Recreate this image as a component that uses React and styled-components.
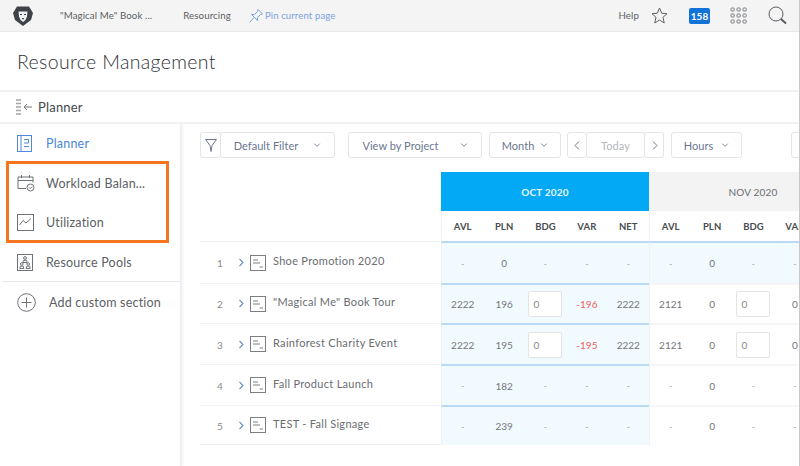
import React from 'react';
import styled, { createGlobalStyle } from 'styled-components';

const GlobalStyle = createGlobalStyle`
  html, body {
    margin: 0;
    height: 100%;
    overflow: hidden;
    background: #fff;
  }
  * { box-sizing: border-box; }
`;

const Page = styled.div`
  width: 800px;
  height: 466px;
  overflow: hidden;
  border-right: 1px solid #c9c9c9;
  font-family: 'Lato', 'Open Sans', sans-serif;
  color: #555a60;
  display: flex;
  flex-direction: column;
`;

const TopBar = styled.header`
  height: 32px;
  flex: none;
  display: flex;
  align-items: center;
  background: #f4f4f4;
  border-bottom: 1px solid #e9e9e9;
  padding-left: 13px;
  font-size: 9.7px;
`;

const TopLink = styled.span`
  color: #5c5f63;
  letter-spacing: 0.1px;
  margin-left: ${props => props.$left || 0}px;
  margin-right: ${props => props.$right || 0}px;
  margin-top: -2px;
  white-space: nowrap;
`;

const PinLink = styled.span`
  display: flex;
  align-items: center;
  gap: 1px;
  margin-left: 17px;
  color: #7da3de;
  font-size: 9.6px;
  letter-spacing: 0.1px;
`;

const TopRight = styled.div`
  margin-left: auto;
  display: flex;
  align-items: center;
  padding-right: 12px;
`;

const Badge = styled.span`
  width: 21px;
  height: 16px;
  margin: 0 20px 0 21px;
  border-radius: 2px;
  background: #1273d8;
  color: #fff;
  font-size: 10px;
  font-weight: 700;
  display: flex;
  align-items: center;
  justify-content: center;
`;

const SearchSlot = styled.span`
  margin-left: 21px;
  display: flex;
`;

const TitleBar = styled.div`
  height: 60px;
  flex: none;
  display: flex;
  align-items: center;
  padding-left: 17px;
  border-bottom: 2px solid #f1f1f1;
`;

const Title = styled.h1`
  margin: 0;
  font-size: 19.5px;
  font-weight: 300;
  letter-spacing: 0.35px;
  color: #2f3238;
`;

const Crumb = styled.div`
  height: 32px;
  flex: none;
  display: flex;
  align-items: center;
  gap: 5px;
  padding-left: 16px;
  border-bottom: 2px solid #f1f1f1;
  font-size: 13px;
  letter-spacing: 0.2px;
  color: #44484d;
`;

const Main = styled.div`
  flex: 1;
  min-height: 0;
  display: flex;
`;

const Sidebar = styled.nav`
  width: 182px;
  flex: none;
  padding: 1px 0 0 2px;
  border-right: 2px solid #eef0f3;
  box-shadow: 1px 0 2px #f3f4f6;
`;

const NavItem = styled.div`
  height: ${props => props.$height || 38}px;
  display: flex;
  align-items: center;
  padding-left: ${props => props.$inset ? 8 : 15}px;
  font-size: 12.5px;
  letter-spacing: 0.2px;
  color: ${props => props.$active ? '#4a85dc' : '#5d6065'};
`;

const NavIcon = styled.span`
  width: ${props => props.$width || 29}px;
  flex: none;
  display: flex;
`;

const Highlight = styled.div`
  width: 163px;
  height: 82px;
  margin-left: 4px;
  padding-top: 1px;
  border: 3px solid #f6761f;
  display: flex;
  flex-direction: column;
  justify-content: center;
  gap: 3px;
`;

const NavDivider = styled.div`
  height: 1px;
  background: #e6e8ec;
`;

const Content = styled.section`
  flex: 1;
  min-width: 0;
  padding: 8px 0 0 18px;
  overflow: hidden;
`;

const Toolbar = styled.div`
  height: 26px;
  display: flex;
  width: 640px;
`;

const ToolButton = styled.div`
  width: ${props => props.$width}px;
  height: 26px;
  flex: none;
  margin-left: ${props => props.$left || 0}px;
  display: flex;
  align-items: center;
  justify-content: center;
  gap: ${props => props.$gap || 0}px;
  border: 1.5px solid #e4e5e7;
  border-radius: 3px;
  background: #fff;
  font-size: 11px;
  letter-spacing: 0.05px;
  color: ${props => props.$muted ? '#b5b8bd' : '#6a7690'};
`;

const Planner = styled.div`
  margin-top: 14px;
  width: 640px;
`;

const HeadRow = styled.div`
  display: flex;
  height: 39px;
  padding-left: 241px;
`;

const MonthHead = styled.div`
  width: 208px;
  flex: none;
  display: flex;
  align-items: center;
  justify-content: center;
  font-size: 10px;
  font-weight: ${props => props.$current ? 700 : 400};
  letter-spacing: 0.2px;
  background: ${props => props.$current ? '#03a9f4' : '#f3f3f3'};
  color: ${props => props.$current ? '#e8f7ff' : '#6a6d72'};
`;

const SubHead = styled.div`
  display: flex;
  height: 30px;
  padding-left: 241px;
`;

const Columns = styled.div`
  width: 208px;
  flex: none;
  display: grid;
  grid-template-columns: repeat(5, 1fr);
  border-left: 1px solid #eef0f2;
`;

const ColLabel = styled.div`
  display: flex;
  align-items: center;
  justify-content: center;
  font-size: 9.5px;
  font-weight: 700;
  letter-spacing: 0.1px;
  color: #4a4d52;
`;

const Row = styled.div`
  display: flex;
  height: ${props => props.$height}px;
`;

const RowName = styled.div`
  width: 241px;
  flex: none;
  display: flex;
  align-items: center;
  border-top: 1px solid #f3f3f3;
  border-bottom: ${props => props.$last ? '1px solid #f0f0f0' : 'none'};
`;

const RowIndex = styled.span`
  width: 40px;
  padding-top: 1px;
  text-align: center;
  font-size: 10px;
  color: #85888d;
`;

const RowIcon = styled.span`
  margin-left: 5px;
  display: flex;
`;

const RowChevron = styled.span`
  margin-left: -2px;
  display: flex;
`;

const RowTitle = styled.span`
  margin-left: 7px;
  padding-bottom: 4px;
  font-size: 11px;
  letter-spacing: 0.3px;
  color: #6a6d72;
  white-space: nowrap;
`;

const RowCells = styled(Columns)`
  background: ${props => props.$tinted ? '#f1faff' : '#fff'};
  border-top: 2px solid ${props => props.$tinted ? '#b9d9f5' : '#f5f5f5'};
`;

const Cell = styled.div`
  display: flex;
  align-items: center;
  justify-content: center;
  font-size: ${props => props.$empty ? 9 : 10}px;
  color: ${props => props.$negative ? '#f0605a' : props.$empty ? '#a5a8ac' : '#73767a'};
`;

const BudgetInput = styled.div`
  width: 34px;
  height: 26px;
  padding-left: 4px;
  display: flex;
  align-items: center;
  background: #fff;
  border: 1.5px solid #e4e4e4;
  border-radius: 2px;
  font-size: 10px;
  color: #85888d;
`;

const LionLogo = () => (
  <svg width="20" height="20" viewBox="0 0 20 20">
    <path d="M4 0.5 H16 L20 7 L18 14 L10 20 L2 14 L0 7 Z" fill="#3f4347" />
    <path d="M5.5 5.5 H14.5 L14 10.5 L12.5 14 L10 16 L7.5 14 L6 10.5 Z" fill="#eef0f2" />
    <path d="M7 8.5 H9 M11 8.5 H13" stroke="#3f4347" strokeWidth="1" />
    <path d="M8.7 12 H11.3 L10 13.8 Z" fill="#3f4347" />
  </svg>
);

const PinIcon = () => (
  <svg width="16" height="16" viewBox="0 0 16 16" fill="none" stroke="#7da3de" strokeWidth="1">
    <path d="M10 1.5 L14.5 6 L12.5 6.5 L9.5 9.5 L9.5 12.5 L3.5 6.5 L6.5 6.5 L9.5 3.5 Z M6 9.5 L1.5 14.5" />
  </svg>
);

const StarIcon = () => (
  <svg width="17" height="17" viewBox="0 0 17 17" fill="none" stroke="#5f6266" strokeWidth="1">
    <path d="M8.5 1 L10.7 6.2 L16 6.7 L12 10.3 L13.2 16 L8.5 13 L3.8 16 L5 10.3 L1 6.7 L6.3 6.2 Z" />
  </svg>
);

const AppsIcon = () => (
  <svg width="17" height="17" viewBox="0 0 17 17" fill="none" stroke="#7c7f83" strokeWidth="1">
    {[1, 7, 13].map(y => [1, 7, 13].map(x => (
      <rect key={`${x}-${y}`} x={x} y={y} width="3.2" height="3" rx="0.6" />
    )))}
  </svg>
);

const SearchIcon = () => (
  <svg width="19" height="19" viewBox="0 0 19 19" fill="none" stroke="#5a5d61">
    <circle cx="8" cy="8" r="7" strokeWidth="1" />
    <path d="M13 13 L18 17.5" strokeWidth="2" />
  </svg>
);

const CollapseIcon = () => (
  <svg width="17" height="17" viewBox="0 0 17 17" fill="none">
    <path d="M0 1 H5 M0 4.5 H5 M0 8 H5 M0 11.5 H5 M0 15 H5" stroke="#a3a5a8" strokeWidth="1.5" />
    <path d="M16 8 H8 M11 5 L8 8 L11 11" stroke="#77797d" strokeWidth="1" />
  </svg>
);

const PlannerIcon = () => (
  <svg width="15" height="17" viewBox="0 0 15 17" fill="none" stroke="#4f88da" strokeWidth="1">
    <rect x="0.5" y="0.5" width="14" height="16" />
    <path d="M4 0.5 V16.5 M7 4.5 H11.5 V8 H7 M7 11.5 H12" />
  </svg>
);

const CalendarIcon = () => (
  <svg width="18" height="18" viewBox="0 0 18 18" fill="none" stroke="#6f7276" strokeWidth="1">
    <path d="M9 14.5 H1 V3 H16 V8.5 M1 6.5 H16 M4.5 1 V4 M12.5 1 V4" />
    <circle cx="13.5" cy="13.5" r="3.5" />
    <path d="M12 13.5 L13.2 14.7 L15.2 12.5" />
  </svg>
);

const ChartIcon = () => (
  <svg width="17" height="17" viewBox="0 0 17 17" fill="none" stroke="#6f7276" strokeWidth="1">
    <rect x="0.5" y="0.5" width="16" height="16" />
    <path d="M2.5 11 L6 6.5 L9 9 L14 4.5" />
  </svg>
);

const PoolsIcon = () => (
  <svg width="16" height="17" viewBox="0 0 16 17" fill="none" stroke="#6f7276" strokeWidth="1">
    <rect x="0.5" y="0.5" width="15" height="16" />
    <circle cx="8" cy="4" r="1.4" />
    <path d="M5.8 8.5 H10.2 L9.5 6.3 H6.5 Z" />
    <circle cx="4.8" cy="10" r="1.3" />
    <circle cx="11.2" cy="10" r="1.3" />
    <path d="M2.8 14.5 L3.3 12.2 H6.3 L6.8 14.5 Z M9.2 14.5 L9.7 12.2 H12.7 L13.2 14.5 Z" />
  </svg>
);

const PlusIcon = () => (
  <svg width="19" height="19" viewBox="0 0 19 19" fill="none" stroke="#6f7276" strokeWidth="1">
    <circle cx="9.5" cy="9.5" r="8.8" />
    <path d="M9.5 4.5 V14.5 M4.5 9.5 H14.5" />
  </svg>
);

const FilterIcon = () => (
  <svg width="12" height="13" viewBox="0 0 12 13" fill="none" stroke="#6a7690" strokeWidth="1">
    <path d="M0.5 0.5 H11.5 L7 6.5 L6 12.5 L5 6.5 Z" />
  </svg>
);

const Caret = ({ dir = 'down', size = 8 }) => {
  const paths = {
    down: 'M1 3 L4 6 L7 3',
    left: 'M5.5 0.5 L1.5 4.5 L5.5 8.5',
    right: 'M2.5 0.5 L6.5 4.5 L2.5 8.5',
  };
  return (
    <svg width={size} height={size} viewBox="0 0 8 9" fill="none" stroke="#6a7690" strokeWidth="1">
      <path d={paths[dir]} />
    </svg>
  );
};

const ChevronIcon = () => (
  <svg width="7" height="9" viewBox="0 0 7 9" fill="none" stroke="#6a90cc" strokeWidth="1.1">
    <path d="M1.5 1 L5 4.5 L1.5 8" />
  </svg>
);

const ProjectIcon = () => (
  <svg width="16" height="16" viewBox="0 0 16 16" fill="none" stroke="#7b7e82" strokeWidth="1">
    <rect x="0.5" y="0.5" width="15" height="15" />
    <path d="M3 5 H8 M3 8 H10 M9.5 12 H13" />
  </svg>
);

const COLUMNS = ['AVL', 'PLN', 'BDG', 'VAR', 'NET'];

const rows = [
  { name: 'Shoe Promotion 2020', height: 42, oct: ['-', '0', '-', '-', '-'], nov: ['-', '0', '-', '-', '-'], novTinted: true },
  { name: '"Magical Me" Book Tour', height: 40, oct: ['2222', '196', 'input', '-196', '2222'], nov: ['2121', '0', 'input', '0', '2121'] },
  { name: 'Rainforest Charity Event', height: 41, oct: ['2222', '195', 'input', '-195', '2222'], nov: ['2121', '0', 'input', '0', '2121'] },
  { name: 'Fall Product Launch', height: 41, oct: ['-', '182', '-', '-', '-'], nov: ['-', '0', '-', '-', '-'] },
  { name: 'TEST - Fall Signage', height: 40, oct: ['-', '239', '-', '-', '-'], nov: ['-', '0', '-', '-', '-'] },
];

const renderCell = (value, i) => {
  if (value === 'input') {
    return <Cell key={i}><BudgetInput>0</BudgetInput></Cell>;
  }
  const negative = value.startsWith('-') && value.length > 1;
  return <Cell key={i} $empty={value === '-'} $negative={negative}>{value}</Cell>;
};

const App = () => (
  <Page>
    <GlobalStyle />
    <TopBar>
      <LionLogo />
      <TopLink $left={27}>"Magical Me" Book ...</TopLink>
      <TopLink $left={31}>Resourcing</TopLink>
      <PinLink><PinIcon />Pin current page</PinLink>
      <TopRight>
        <TopLink $right={12}>Help</TopLink>
        <StarIcon />
        <Badge>158</Badge>
        <AppsIcon />
        <SearchSlot><SearchIcon /></SearchSlot>
      </TopRight>
    </TopBar>
    <TitleBar><Title>Resource Management</Title></TitleBar>
    <Crumb><CollapseIcon />Planner</Crumb>
    <Main>
      <Sidebar>
        <NavItem $active $height={36}><NavIcon><PlannerIcon /></NavIcon>Planner</NavItem>
        <Highlight>
          <NavItem $inset><NavIcon><CalendarIcon /></NavIcon>Workload Balan...</NavItem>
          <NavItem $inset><NavIcon><ChartIcon /></NavIcon>Utilization</NavItem>
        </Highlight>
        <NavItem><NavIcon><PoolsIcon /></NavIcon>Resource Pools</NavItem>
        <NavDivider />
        <NavItem $height={40}><NavIcon $width={32}><PlusIcon /></NavIcon>Add custom section</NavItem>
      </Sidebar>
      <Content>
        <Toolbar>
          <ToolButton $width={21}><FilterIcon /></ToolButton>
          <ToolButton $width={115} $left={-1} $gap={15}>Default Filter <Caret /></ToolButton>
          <ToolButton $width={134} $left={13} $gap={21}>View by Project <Caret /></ToolButton>
          <ToolButton $width={72} $left={7} $gap={6}>Month <Caret /></ToolButton>
          <ToolButton $width={20} $left={6}><Caret dir="left" size={9} /></ToolButton>
          <ToolButton $width={59} $left={-1} $muted>Today</ToolButton>
          <ToolButton $width={20} $left={-1}><Caret dir="right" size={9} /></ToolButton>
          <ToolButton $width={71} $left={7} $gap={8}>Hours <Caret /></ToolButton>
          <ToolButton $width={30} $left={49} />
        </Toolbar>
        <Planner>
          <HeadRow>
            <MonthHead $current>OCT 2020</MonthHead>
            <MonthHead>NOV 2020</MonthHead>
          </HeadRow>
          <SubHead>
            <Columns>{COLUMNS.map(c => <ColLabel key={c}>{c}</ColLabel>)}</Columns>
            <Columns>{COLUMNS.map(c => <ColLabel key={c}>{c}</ColLabel>)}</Columns>
          </SubHead>
          {rows.map((row, i) => (
            <Row key={row.name} $height={row.height}>
              <RowName $last={i === rows.length - 1}>
                <RowIndex>{i + 1}</RowIndex>
                <RowChevron><ChevronIcon /></RowChevron>
                <RowIcon><ProjectIcon /></RowIcon>
                <RowTitle>{row.name}</RowTitle>
              </RowName>
              <RowCells $tinted>{row.oct.map(renderCell)}</RowCells>
              <RowCells $tinted={row.novTinted}>{row.nov.map(renderCell)}</RowCells>
            </Row>
          ))}
        </Planner>
      </Content>
    </Main>
  </Page>
);

export default App;
